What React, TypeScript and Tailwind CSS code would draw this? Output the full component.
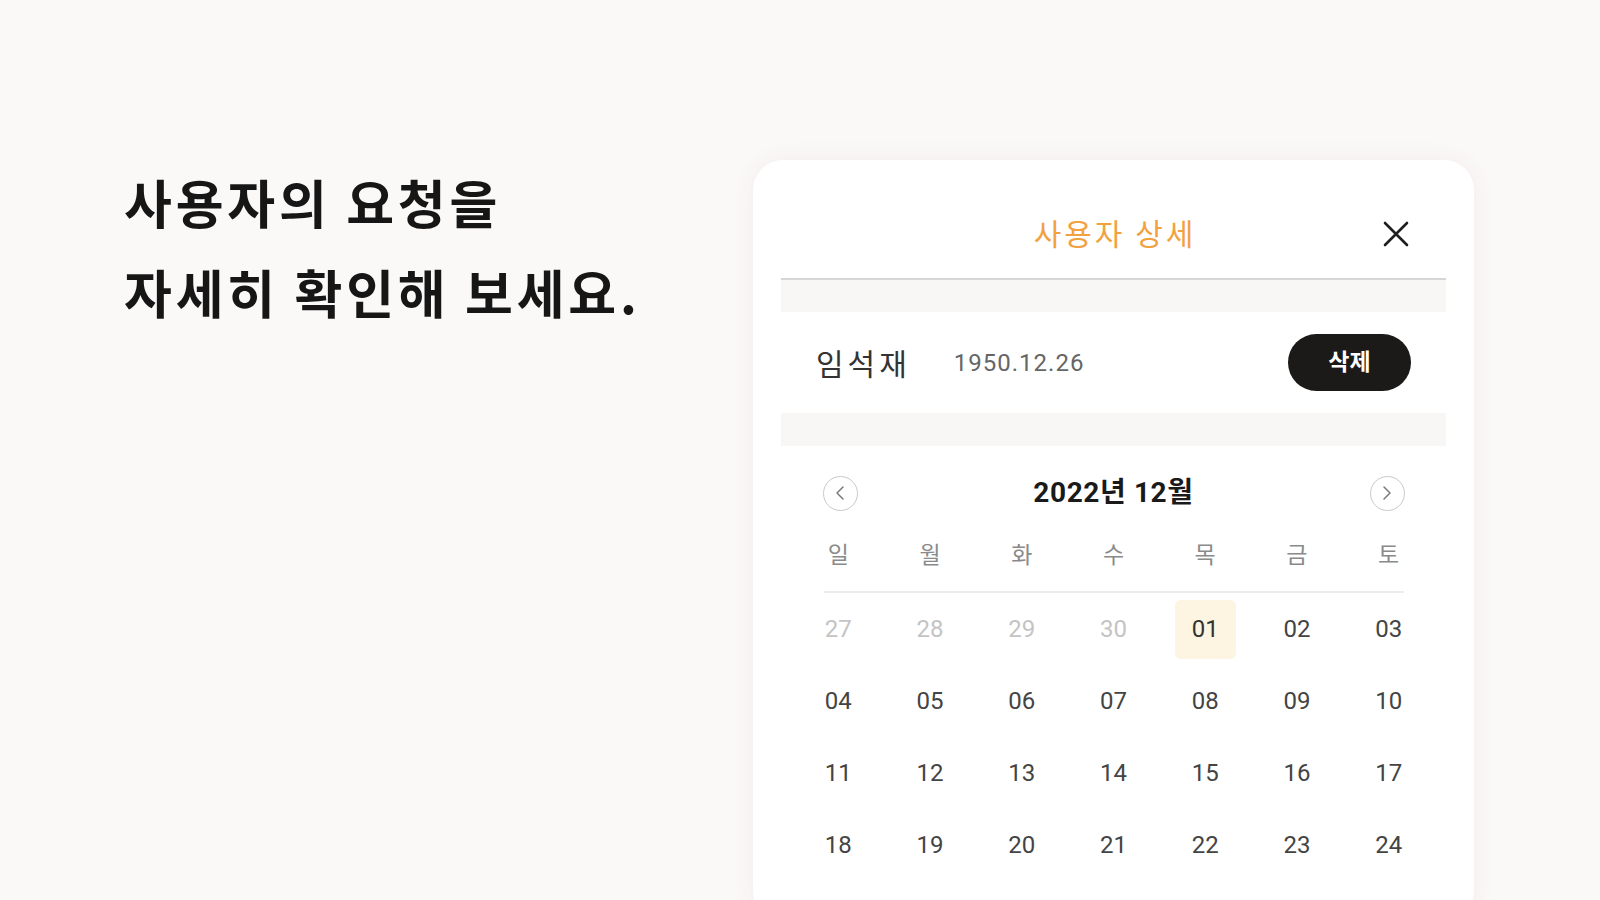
import { ChevronLeft, ChevronRight } from 'lucide-react'

const WEEKDAYS = ['일', '월', '화', '수', '목', '금', '토']

// december 2022, padded with the tail of november (only the rows on screen)
const WEEKS: { day: string; muted?: boolean; today?: boolean }[][] = [
  [
    { day: '27', muted: true },
    { day: '28', muted: true },
    { day: '29', muted: true },
    { day: '30', muted: true },
    { day: '01', today: true },
    { day: '02' },
    { day: '03' },
  ],
  ['04', '05', '06', '07', '08', '09', '10'].map(day => ({ day })),
  ['11', '12', '13', '14', '15', '16', '17'].map(day => ({ day })),
  ['18', '19', '20', '21', '22', '23', '24'].map(day => ({ day })),
]

function CloseIcon() {
  return (
    <svg width="26" height="26" viewBox="0 0 26 26" fill="none">
      <path d="M2 2L24 24M24 2L2 24" stroke="#1f1f1f" strokeWidth="2.6" strokeLinecap="round" />
    </svg>
  )
}

function NavButton({ dir }: { dir: 'prev' | 'next' }) {
  return (
    <button
      type="button"
      className="w-[35px] h-[35px] rounded-full border-[1.5px] border-[#c9c9c9] flex items-center justify-center text-[#7a7a7a]"
    >
      {dir === 'prev' ? <ChevronLeft size={24} strokeWidth={1.5} /> : <ChevronRight size={24} strokeWidth={1.5} />}
    </button>
  )
}

function UserDetailCard() {
  return (
    <div className="w-[721px] shrink-0 mt-[3px] bg-white rounded-[30px] shadow-[0_0_24px_rgba(60,40,20,0.06)] px-[28px] pt-[44px] pb-[40px]">
      {/* header */}
      <div className="grid grid-cols-[1fr_auto_1fr] items-center h-[56px]">
        <div />
        <h2 className="text-[30px] leading-none text-[#f2a13f] tracking-[3px] pl-[3px]">사용자 상세</h2>
        <div className="flex justify-end pr-[37px] pt-[4px]">
          <CloseIcon />
        </div>
      </div>
      <div className="mt-[18px] h-[2px] bg-[#d6d6d6]" />

      <div className="h-[32px] bg-[#f9f7f5]" />
      <div className="h-[101px] flex items-center pl-[35px] pr-[35px]">
        <span className="text-[30px] text-[#333] tracking-[4px]">임석재</span>
        <span className="ml-[43px] text-[24px] text-[#666] tracking-[1px] font-['Roboto','Noto_Sans_CJK_KR',sans-serif]">
          1950.12.26
        </span>
        <button
          type="button"
          className="ml-auto w-[123px] h-[57px] rounded-full bg-[#1c1a18] text-white text-[23px] font-bold pb-[4px]"
        >
          삭제
        </button>
      </div>
      <div className="h-[33px] bg-[#f9f7f5]" />

      {/* calendar */}
      <div className="w-[642px] mx-auto">
        <div className="mt-[22px] h-[50px] px-[30px] flex items-center justify-between">
          <NavButton dir="prev" />
          <span className="text-[28px] font-bold text-[#1a1a1a] tracking-[0.6px] font-['Roboto','Noto_Sans_CJK_KR',sans-serif]">
            2022년 12월
          </span>
          <NavButton dir="next" />
        </div>
        <div className="mt-[15px] h-[40px] grid grid-cols-7 items-center">
          {WEEKDAYS.map(w => (
            <span key={w} className="text-center text-[23px] text-[#8a8a8a]">
              {w}
            </span>
          ))}
        </div>
        <div className="mt-[18px] mx-[31px] h-[2px] bg-[#ececec]" />
        {WEEKS.map((week, i) => (
          <div key={i} className="h-[72px] grid grid-cols-7 items-center">
            {week.map(d => (
              <div key={d.day} className="flex justify-center">
                <span
                  className={`w-[61px] h-[59px] flex items-center justify-center rounded-[6px] text-[24px] font-['Roboto','Noto_Sans_CJK_KR',sans-serif] ${
                    d.today ? 'bg-[#fdf5e1] text-[#333]' : d.muted ? 'text-[#c4c4c4]' : 'text-[#444]'
                  }`}
                >
                  {d.day}
                </span>
              </div>
            ))}
          </div>
        ))}
      </div>
    </div>
  )
}

export default function App() {
  return (
    <div className="w-[1600px] h-[900px] overflow-hidden bg-[#fbf9f8] font-['Noto_Sans_CJK_KR','Noto_Sans',sans-serif]">
      <div className="flex items-start pt-[157px] pl-[124px]">
        <h1 className="w-[629px] shrink-0 text-[52px] leading-[90px] font-bold text-[#161616] tracking-[3.8px]">
          사용자의 요청을
          <br />
          자세히 확인해 보세요.
        </h1>
        <UserDetailCard />
      </div>
    </div>
  )
}
